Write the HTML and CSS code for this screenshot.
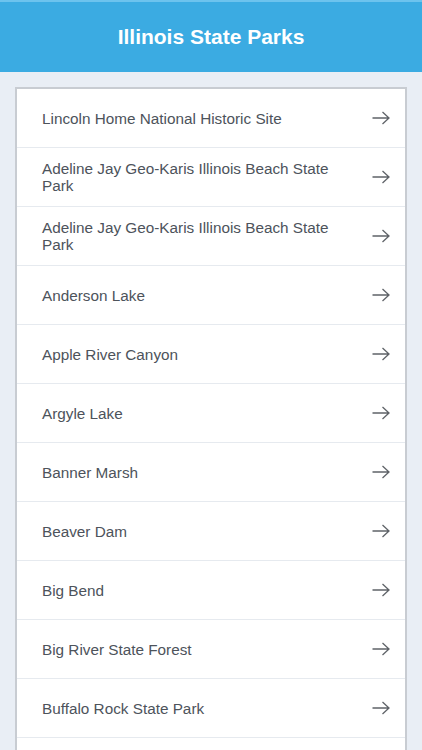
FILE: index.html
```html
<!DOCTYPE html>
<html>
<head>
<meta charset="utf-8">
<link rel="stylesheet" href="styles.css">
</head>
<body>
<header class="topbar"><h1 class="title">Illinois State Parks</h1></header>
<main class="content">
  <ul class="list">
    <li class="row"><span class="name">Lincoln Home National Historic Site</span><svg class="arrow" viewBox="0 0 18 14"><path d="M0.5 7H17M10.5 1L17 7L10.5 13"/></svg></li>
    <li class="row"><span class="name">Adeline Jay Geo-Karis Illinois Beach State Park</span><svg class="arrow" viewBox="0 0 18 14"><path d="M0.5 7H17M10.5 1L17 7L10.5 13"/></svg></li>
    <li class="row"><span class="name">Adeline Jay Geo-Karis Illinois Beach State Park</span><svg class="arrow" viewBox="0 0 18 14"><path d="M0.5 7H17M10.5 1L17 7L10.5 13"/></svg></li>
    <li class="row"><span class="name">Anderson Lake</span><svg class="arrow" viewBox="0 0 18 14"><path d="M0.5 7H17M10.5 1L17 7L10.5 13"/></svg></li>
    <li class="row"><span class="name">Apple River Canyon</span><svg class="arrow" viewBox="0 0 18 14"><path d="M0.5 7H17M10.5 1L17 7L10.5 13"/></svg></li>
    <li class="row"><span class="name">Argyle Lake</span><svg class="arrow" viewBox="0 0 18 14"><path d="M0.5 7H17M10.5 1L17 7L10.5 13"/></svg></li>
    <li class="row"><span class="name">Banner Marsh</span><svg class="arrow" viewBox="0 0 18 14"><path d="M0.5 7H17M10.5 1L17 7L10.5 13"/></svg></li>
    <li class="row"><span class="name">Beaver Dam</span><svg class="arrow" viewBox="0 0 18 14"><path d="M0.5 7H17M10.5 1L17 7L10.5 13"/></svg></li>
    <li class="row"><span class="name">Big Bend</span><svg class="arrow" viewBox="0 0 18 14"><path d="M0.5 7H17M10.5 1L17 7L10.5 13"/></svg></li>
    <li class="row"><span class="name">Big River State Forest</span><svg class="arrow" viewBox="0 0 18 14"><path d="M0.5 7H17M10.5 1L17 7L10.5 13"/></svg></li>
    <li class="row"><span class="name">Buffalo Rock State Park</span><svg class="arrow" viewBox="0 0 18 14"><path d="M0.5 7H17M10.5 1L17 7L10.5 13"/></svg></li>
  </ul>
</main>
</body>
</html>
```
FILE: styles.css
```css
html, body {
  margin: 0;
  padding: 0;
  height: 100%;
  overflow: hidden;
}
body {
  background: #e9eef5;
  font-family: "Liberation Sans", Arial, sans-serif;
}
.topbar {
  height: 72px;
  background: #3babe2;
  border-top: 2px solid #6cc3ee;
  box-sizing: border-box;
  display: flex;
  align-items: center;
  justify-content: center;
}
.title {
  margin: 0;
  color: #ffffff;
  font-size: 21px;
  font-weight: bold;
}
.content {
  padding: 15px 15px 0 15px;
}
.list {
  list-style: none;
  margin: 0;
  padding: 0 0 40px 0;
  background: #ffffff;
  border: 2px solid #c8ccd2;
  border-bottom: none;
}
.row {
  height: 59px;
  box-sizing: border-box;
  border-bottom: 1px solid #e6eaef;
  display: flex;
  align-items: center;
  justify-content: space-between;
  padding: 0 15px 0 25px;
}
.name {
  font-size: 15.3px;
  line-height: 17px;
  color: #4d535b;
  max-width: 300px;
}
.arrow {
  width: 18px;
  height: 14px;
  flex: none;
  fill: none;
  stroke: #5f6368;
  stroke-width: 1.3;
}
```
